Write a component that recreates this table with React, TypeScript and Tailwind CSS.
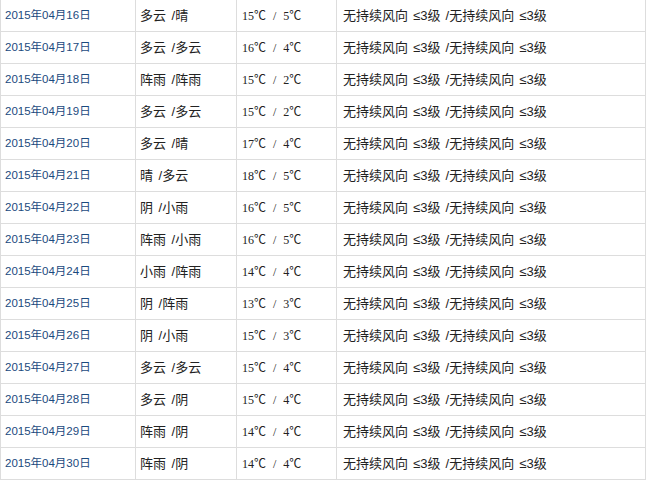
const rows: [string, string, string, string][] = [
  ["2015年04月16日", "多云 /晴", "15℃ / 5℃", "无持续风向 ≤3级 /无持续风向 ≤3级"],
  ["2015年04月17日", "多云 /多云", "16℃ / 4℃", "无持续风向 ≤3级 /无持续风向 ≤3级"],
  ["2015年04月18日", "阵雨 /阵雨", "15℃ / 2℃", "无持续风向 ≤3级 /无持续风向 ≤3级"],
  ["2015年04月19日", "多云 /多云", "15℃ / 2℃", "无持续风向 ≤3级 /无持续风向 ≤3级"],
  ["2015年04月20日", "多云 /晴", "17℃ / 4℃", "无持续风向 ≤3级 /无持续风向 ≤3级"],
  ["2015年04月21日", "晴 /多云", "18℃ / 5℃", "无持续风向 ≤3级 /无持续风向 ≤3级"],
  ["2015年04月22日", "阴 /小雨", "16℃ / 5℃", "无持续风向 ≤3级 /无持续风向 ≤3级"],
  ["2015年04月23日", "阵雨 /小雨", "16℃ / 5℃", "无持续风向 ≤3级 /无持续风向 ≤3级"],
  ["2015年04月24日", "小雨 /阵雨", "14℃ / 4℃", "无持续风向 ≤3级 /无持续风向 ≤3级"],
  ["2015年04月25日", "阴 /阵雨", "13℃ / 3℃", "无持续风向 ≤3级 /无持续风向 ≤3级"],
  ["2015年04月26日", "阴 /小雨", "15℃ / 3℃", "无持续风向 ≤3级 /无持续风向 ≤3级"],
  ["2015年04月27日", "多云 /多云", "15℃ / 4℃", "无持续风向 ≤3级 /无持续风向 ≤3级"],
  ["2015年04月28日", "多云 /阴", "15℃ / 4℃", "无持续风向 ≤3级 /无持续风向 ≤3级"],
  ["2015年04月29日", "阵雨 /阴", "14℃ / 4℃", "无持续风向 ≤3级 /无持续风向 ≤3级"],
  ["2015年04月30日", "阵雨 /阴", "14℃ / 4℃", "无持续风向 ≤3级 /无持续风向 ≤3级"],
];

export default function App() {
  return (
    <div className="h-[480px] w-[648px] overflow-hidden bg-white font-['Liberation_Sans','Noto_Sans_CJK_SC',sans-serif] text-[12px]">
      <div className="w-[646px] border-l border-[#dddddd]">
        {rows.map(([date, weather, temp, wind]) => (
          <div key={date} className="flex h-[32px] items-center border-b border-[#dddddd]">
            <div className="flex h-full w-[135px] items-center border-r border-[#dddddd] pl-[4px] text-[11.5px] text-[#1b4a7e]">
              {date}
            </div>
            <div className="flex h-full w-[101px] items-center border-r border-[#dddddd] pl-[4px] text-[13px] text-[#222222] [word-spacing:2px]">
              {weather}
            </div>
            <div className="flex h-full w-[100px] items-center border-r border-[#dddddd] pl-[5px] font-['Liberation_Serif','Noto_Sans_CJK_SC',serif] text-[12px] text-[#222222] [word-spacing:4px]">
              {temp}
            </div>
            <div className="flex h-full flex-1 items-center border-r border-[#dddddd] pl-[6px] text-[13px] text-[#222222] [word-spacing:1.5px]">
              {wind}
            </div>
          </div>
        ))}
      </div>
    </div>
  );
}
